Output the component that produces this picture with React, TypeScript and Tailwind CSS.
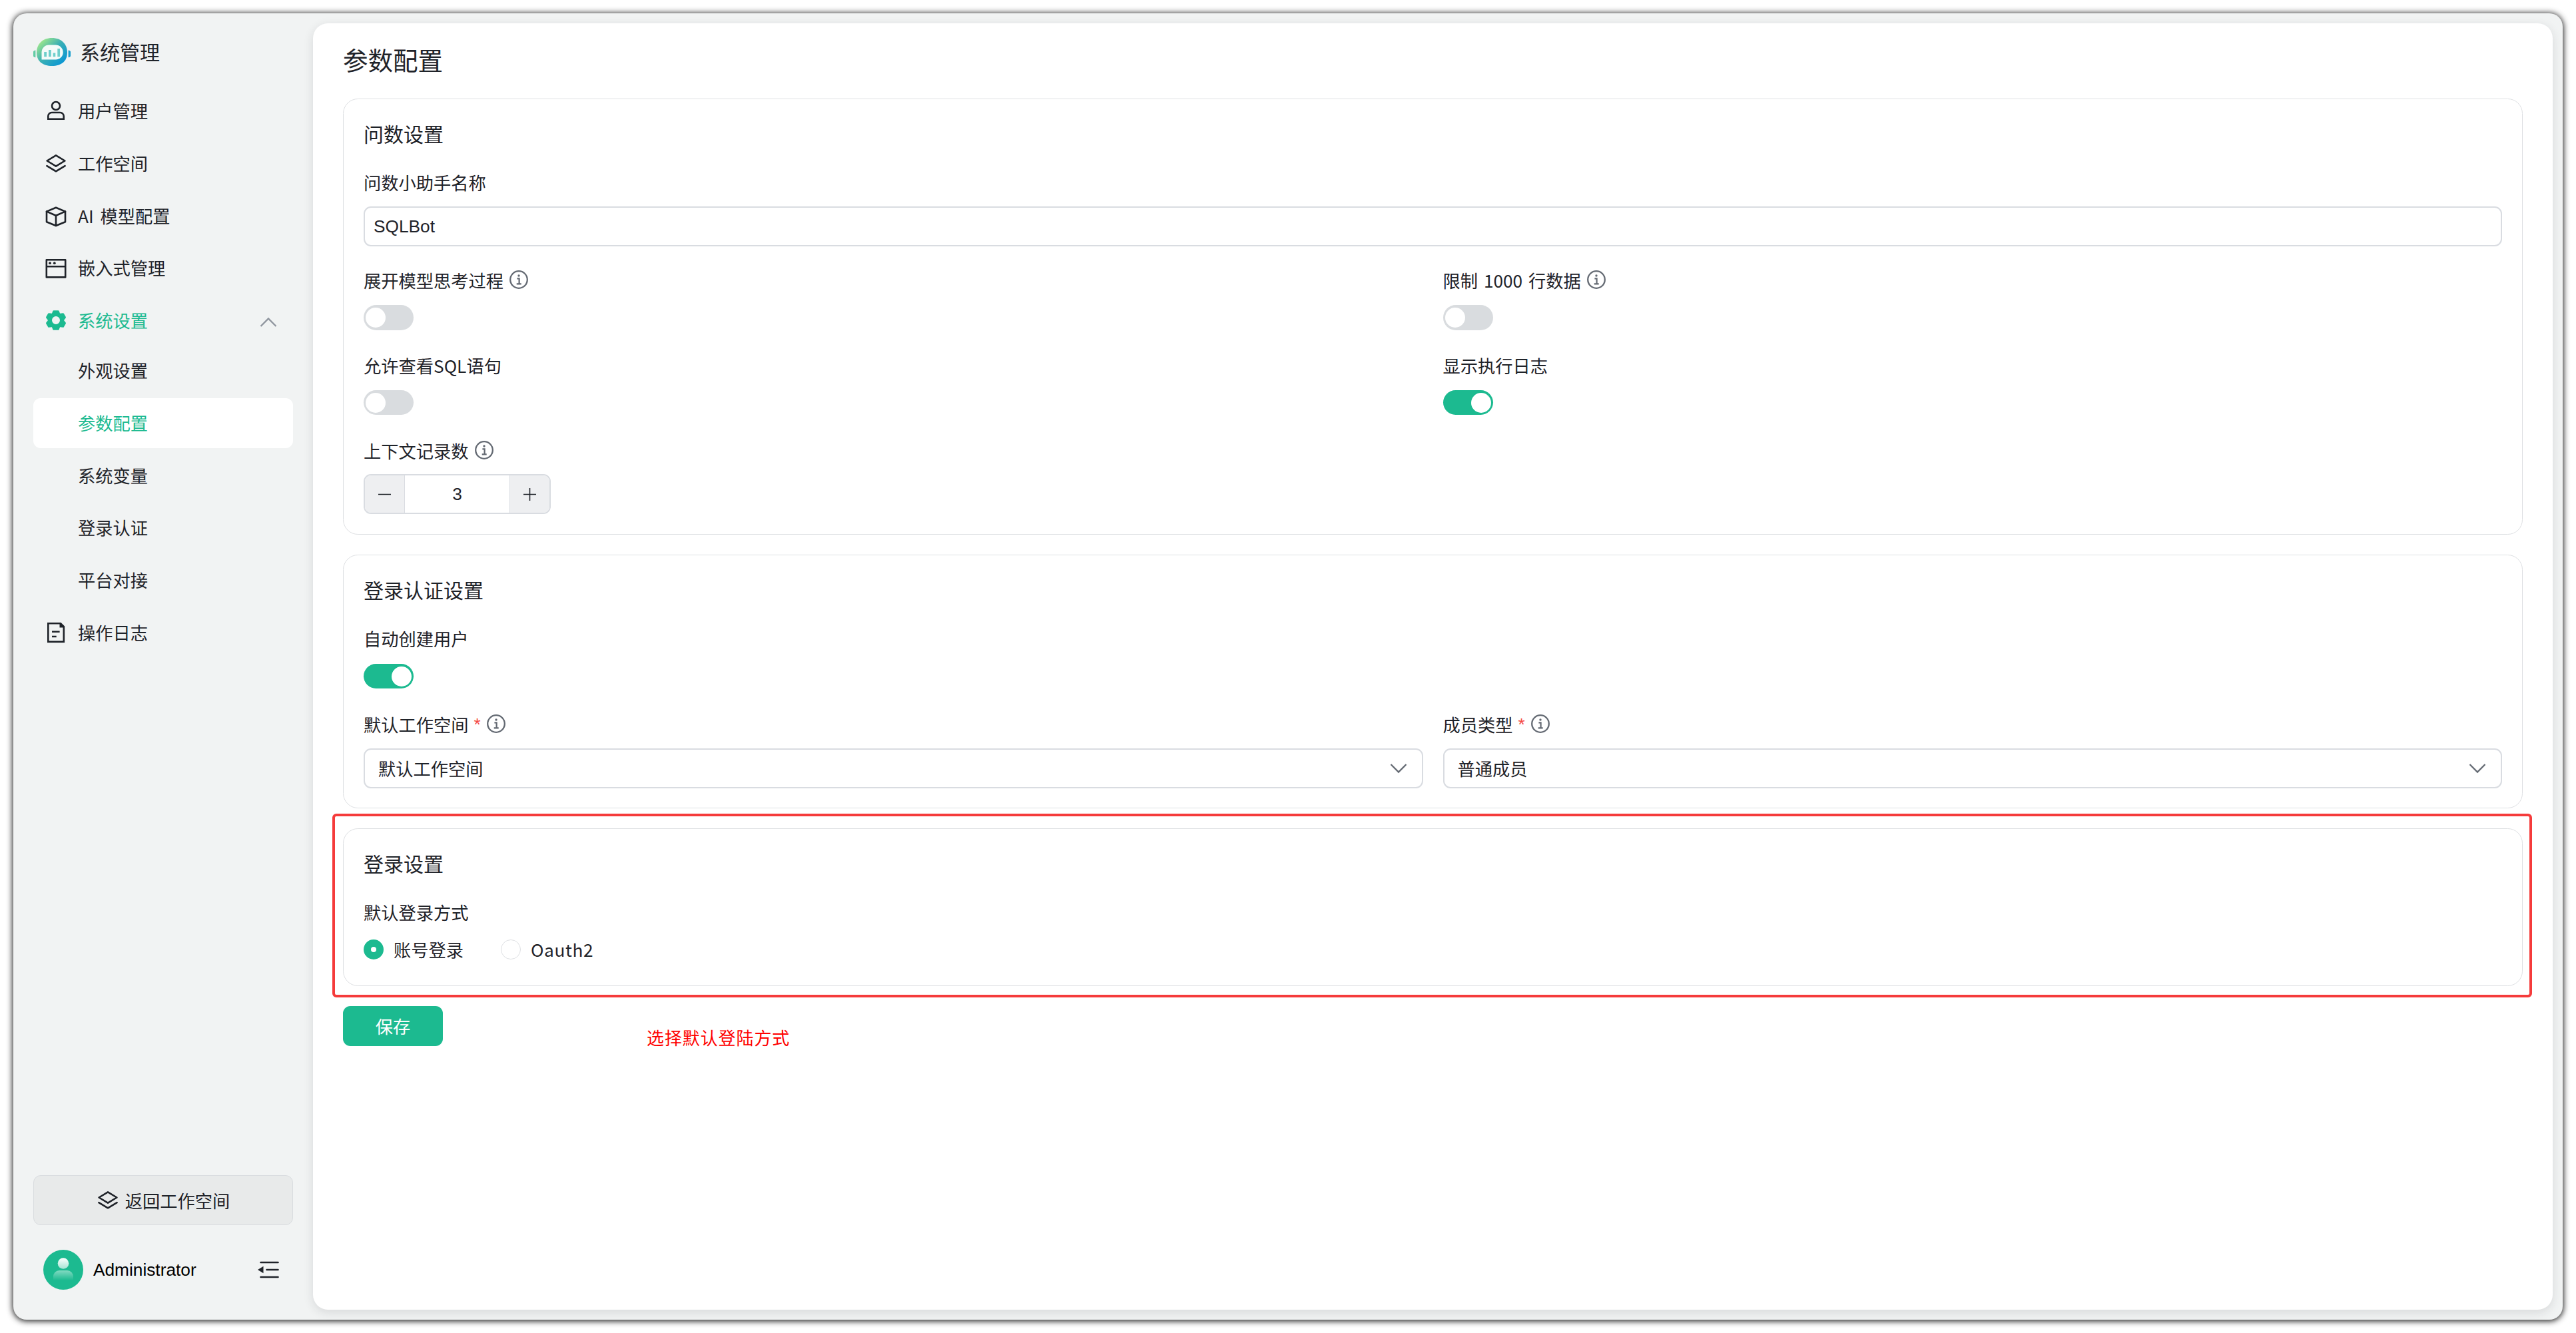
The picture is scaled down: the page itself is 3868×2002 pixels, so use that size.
import React from "react";

const CJK = "font-['Noto_Sans_CJK_SC',sans-serif]";
const ARIAL = "font-['Liberation_Sans','Noto_Sans_CJK_SC',sans-serif]";

function Icon({ children }: { children: React.ReactNode }) {
  return (
    <svg
      className="size-[34px] shrink-0"
      viewBox="0 0 34 34"
      fill="none"
      stroke="currentColor"
      strokeWidth="2.6"
      strokeLinejoin="round"
      strokeLinecap="round"
    >
      {children}
    </svg>
  );
}

const UserIcon = () => (
  <Icon>
    <circle cx="17" cy="9" r="6" />
    <path d="M5.3 28.8v-4.3a5.5 5.5 0 0 1 5.5-5.5h12.4a5.5 5.5 0 0 1 5.5 5.5v4.3z" strokeLinejoin="miter" />
  </Icon>
);

const LayersIcon = () => (
  <Icon>
    <path d="M17 4.4 30.4 12.5 17 20.6 3.6 12.5z" />
    <path d="M3.4 20.2 17 28.3l13.6-8.1" />
  </Icon>
);

const CubeIcon = () => (
  <Icon>
    <path d="M17 3.8 31 9.6v15.6L17 31 3 25.2V9.6z" />
    <path d="M3 9.6 17 15.8 31 9.6M17 15.8V31" />
  </Icon>
);

const WindowIcon = () => (
  <Icon>
    <path d="M2.8 4.2h28.4v26.2H2.800zM2.8 14.2h28.4" />
    <circle cx="8" cy="9.2" r="1.9" fill="currentColor" stroke="none" />
    <circle cx="14.8" cy="9.2" r="1.9" fill="currentColor" stroke="none" />
  </Icon>
);

const GearIcon = () => (
  <Icon>
    <path
      fill="currentColor"
      stroke="none"
      fillRule="evenodd"
      d="M13.600 1.200h6.800q.9 0 1.200.9l1.500 3.700 4.500-.6q.8-.1 1.200.6l2.900 5q.5.900 0 1.600L29 16l2.700 3.600q.5.700 0 1.600l-2.900 5q-.4.700-1.200.6l-4.500-.6-1.500 3.700q-.3.900-1.200.9h-6.800q-.9 0-1.200-.9l-1.500-3.700-4.500.6q-.8.100-1.200-.6l-2.900-5q-.5-.9 0-1.600L5 16l-2.700-3.600q-.5-.7 0-1.600l2.900-5q.4-.7 1.200-.6l4.500.6 1.500-3.700q.3-.9 1.200-.9zM17 10a6 6 0 1 0 0 12 6 6 0 0 0 0-12z"
    />
  </Icon>
);

const DocIcon = () => (
  <Icon>
    <path d="M5.300 2.300H24l4.800 4.800v22.800H5.300z" strokeLinejoin="miter" />
    <path d="M22.500 1.500v7h7.300z" fill="currentColor" stroke="none" />
    <path d="M11 14.800h11.600M11 22h6.700" strokeLinecap="butt" />
  </Icon>
);

const Logo = () => (
  <svg className="h-[42px] w-[56px] shrink-0" viewBox="0 0 56 42">
    <defs>
      <linearGradient id="brand" x1="10" y1="4" x2="42" y2="38" gradientUnits="userSpaceOnUse">
        <stop offset="0" stopColor="#a2ea8a" />
        <stop offset=".5" stopColor="#3bb0b4" />
        <stop offset="1" stopColor="#0e98d2" />
      </linearGradient>
    </defs>
    <path d="M28 0c14 0 23 9 23 22C51 35 42 42 28 42S5 35 5 22C5 9 14 0 28 0z" fill="url(#brand)" />
    <path d="M0 21q0-2 3.400-2.500v10.800Q0 28.800 0 27z" fill="#63cca5" />
    <path d="M56 21q0-2-3.400-2.500v10.800q3.400-.5 3.400-2.300z" fill="#1a9fcd" />
    <path d="M23.500 10.500h10A11 11 0 0 1 44.700 21.500 11 11 0 0 1 33.500 32.500H12.500V21.500A11 11 0 0 1 23.500 10.500z" fill="#f4fbfa" />
    <path d="M16.200 21h3.800v7.300h-3.800zM23 18h3.800v10.300H23zM29.700 22.500h3.600v5.800h-3.600zM36.300 16h3.800v12.300h-3.800z" fill="#6fcfcc" />
  </svg>
);

const InfoIcon = () => (
  <svg className="ml-[9px] size-[28px] shrink-0 text-[#646a73]" viewBox="0 0 28 28" fill="none" stroke="currentColor">
    <circle cx="14" cy="14" r="12.8" strokeWidth="2.3" />
    <circle cx="14" cy="8" r="1.7" fill="currentColor" stroke="none" />
    <path d="M11.400 12.400h3.200v7.600M10.700 20.300h7" strokeWidth="2.2" />
  </svg>
);

const ChevronDown = () => (
  <svg className="h-[16px] w-[26px] shrink-0 text-[#646a73]" viewBox="0 0 26 16" fill="none" stroke="currentColor" strokeWidth="2.3">
    <path d="M1.500 2 13 13.500 24.500 2" />
  </svg>
);

function NavItem({ icon, label, active, open }: { icon?: React.ReactNode; label: string; active?: boolean; open?: boolean }) {
  return (
    <div
      className={`flex h-[75px] shrink-0 items-center rounded-[11px] pr-[24px] ${icon ? "pl-[17px]" : "pl-[67px]"} ${
        active ? "bg-white" : ""
      } ${active || open ? "text-[#1cba90]" : "text-[#1f2329]"}`}
    >
      {icon}
      <span className={`relative -top-px text-[26.25px] leading-[40px] [word-spacing:4px] ${icon ? "ml-[16px]" : ""}`}>{label}</span>
      {open && (
        <svg className="mt-[4px] ml-auto h-[16px] w-[26px] text-[#8f959e]" viewBox="0 0 26 16" fill="none" stroke="currentColor" strokeWidth="2.3">
          <path d="M1.500 14 13 2.500 24.500 14" />
        </svg>
      )}
    </div>
  );
}

function Card({ title, className, children }: { title: string; className: string; children: React.ReactNode }) {
  return (
    <section className={`shrink-0 rounded-[22.5px] border border-[#dee0e3] px-[30px] pt-[29px] ${className}`}>
      <h2 className="text-[30px] leading-[45px] font-normal">{title}</h2>
      {children}
    </section>
  );
}

function Label({ text, required, info, className }: { text: string; required?: boolean; info?: boolean; className: string }) {
  return (
    <div className={`flex h-[40px] items-center text-[26.25px] leading-[40px] ${className}`}>
      <span className="pt-[2px] [word-spacing:3px]">{text}</span>
      {required && <span className={`${ARIAL} ml-[8px] pt-[2px] text-[#f54a45]`}>*</span>}
      {info && <InfoIcon />}
    </div>
  );
}

function Toggle({ on, className }: { on?: boolean; className: string }) {
  return (
    <div className={`flex w-[75px] items-center rounded-full px-[3px] ${on ? "justify-end bg-[#1cba90]" : "bg-[#d9dcdf]"} ${className}`}>
      <div className="size-[30px] rounded-full bg-white" />
    </div>
  );
}

function Select({ value }: { value: string }) {
  return (
    <div className="mt-[17px] flex h-[60px] items-center justify-between rounded-[11px] border-2 border-[#d9dce1] pr-[22px] pl-[20px] text-[26.25px] leading-[40px]">
      <span>{value}</span>
      <ChevronDown />
    </div>
  );
}

export default function App() {
  return (
    <div className={`${CJK} h-[2002px] w-[3868px] overflow-hidden bg-white p-[20px] text-[#1f2329]`}>
      <div className="flex h-[1962px] w-[3828px] rounded-[20px] bg-[#f1f3f3] shadow-[0_1px_10px_1px_rgba(0,0,0,0.9)]">
        <aside className="flex w-[450px] shrink-0 flex-col px-[30px]">
          <div className="mt-[37px] flex h-[42px] items-center">
            <Logo />
            <span className="-mt-[2px] ml-[14px] text-[30px] leading-[42px]">系统管理</span>
          </div>
          <nav className="mt-[30.5px] flex flex-col gap-[3.75px]">
            <NavItem icon={<UserIcon />} label="用户管理" />
            <NavItem icon={<LayersIcon />} label="工作空间" />
            <NavItem icon={<CubeIcon />} label="AI 模型配置" />
            <NavItem icon={<WindowIcon />} label="嵌入式管理" />
            <div>
              <NavItem icon={<GearIcon />} label="系统设置" open />
              <div className="flex flex-col gap-[3.75px]">
                <NavItem label="外观设置" />
                <NavItem label="参数配置" active />
                <NavItem label="系统变量" />
                <NavItem label="登录认证" />
                <NavItem label="平台对接" />
              </div>
            </div>
            <NavItem icon={<DocIcon />} label="操作日志" />
          </nav>
          <div className="mt-auto flex h-[75px] w-[390px] items-center justify-center rounded-[11px] border border-[#d9dcdf] bg-[#e8eaea] text-[26.25px] leading-[40px]">
            <LayersIcon />
            <span className="ml-[9px]">返回工作空间</span>
          </div>
          <div className="mt-[37px] mb-[45px] flex h-[60px] items-center pr-[21px] pl-[15px]">
            <svg className="size-[60px] shrink-0" viewBox="0 0 60 60">
              <defs>
                <linearGradient id="head" x1="0" y1="0" x2="0" y2="1">
                  <stop offset="0" stopColor="#fff" />
                  <stop offset="1" stopColor="#fff" stopOpacity=".6" />
                </linearGradient>
                <linearGradient id="torso" x1="0" y1="0" x2="0" y2="1">
                  <stop offset="0" stopColor="#fff" stopOpacity=".45" />
                  <stop offset="1" stopColor="#fff" stopOpacity="0" />
                </linearGradient>
              </defs>
              <circle cx="30" cy="30" r="30" fill="#1cba90" />
              <circle cx="30" cy="20.5" r="8.3" fill="url(#head)" />
              <path d="M15 46v-6a9 9 0 0 1 9-9h12a9 9 0 0 1 9 9v6z" fill="url(#torso)" />
            </svg>
            <span className={`${ARIAL} ml-[15px] text-[26.25px] leading-[40px] text-black`}>Administrator</span>
            <svg className="ml-auto h-[28px] w-[33px] text-[#1f2329]" viewBox="0 0 33 28" fill="none" stroke="currentColor" strokeWidth="2.6" strokeLinecap="round">
              <path d="M5.500 3h26M14.500 14h17M5.500 25h26" />
              <path d="M1 14 9.500 8.800v10.400z" fill="currentColor" stroke="none" />
            </svg>
          </div>
        </aside>

        <main className="mt-[15px] flex h-[1932px] w-[3363px] flex-col rounded-[22.5px] bg-white px-[45px] shadow-[0_4px_15px_rgba(31,35,41,0.12)]">
          <h1 className="mt-[26px] text-[37.5px] leading-[56px] font-normal">参数配置</h1>

          <Card title="问数设置" className="mt-[31px] h-[655px]">
            <Label text="问数小助手名称" className="mt-[30px]" />
            <div className={`${ARIAL} mt-[17px] flex h-[60px] items-center rounded-[11px] border-2 border-[#d9dce1] pl-[13px] text-[26.25px] leading-[40px]`}>
              SQLBot
            </div>
            <div className="mt-[30px] grid grid-cols-2 gap-x-[30px]">
              <div>
                <Label text="展开模型思考过程" info className="" />
                <Toggle className="mt-[18px] h-[38px]" />
                <Label text="允许查看SQL语句" className="mt-[32px]" />
                <Toggle className="mt-[18px] h-[37px]" />
              </div>
              <div>
                <Label text="限制 1000 行数据" info className="" />
                <Toggle className="mt-[18px] h-[38px]" />
                <Label text="显示执行日志" className="mt-[32px]" />
                <Toggle on className="mt-[18px] h-[37px]" />
              </div>
            </div>
            <Label text="上下文记录数" info className="mt-[33px]" />
            <div className="mt-[16px] flex h-[60px] w-[281px] overflow-hidden rounded-[11px] border-2 border-[#d9dce1]">
              <div className="flex w-[60px] shrink-0 items-center justify-center border-r border-[#d9dce1] bg-[#eeeff1]">
                <svg className="size-[19px]" viewBox="0 0 19 19" stroke="#1f2329" strokeWidth="1.6">
                  <path d="M0 9.500h19" />
                </svg>
              </div>
              <div className={`${ARIAL} flex flex-1 items-center justify-center text-[26.25px] leading-[40px]`}>3</div>
              <div className="flex w-[60px] shrink-0 items-center justify-center border-l border-[#d9dce1] bg-[#eeeff1]">
                <svg className="size-[19px]" viewBox="0 0 19 19" stroke="#1f2329" strokeWidth="1.6">
                  <path d="M0 9.500h19M9.500 0v19" />
                </svg>
              </div>
            </div>
          </Card>

          <Card title="登录认证设置" className="mt-[30px] h-[381px]">
            <Label text="自动创建用户" className="mt-[30px]" />
            <Toggle on className="mt-[19px] h-[37px]" />
            <div className="mt-[33px] grid grid-cols-2 gap-x-[30px]">
              <div className="-mb-px">
                <Label text="默认工作空间" required info className="" />
                <Select value="默认工作空间" />
              </div>
              <div className="-mb-px">
                <Label text="成员类型" required info className="" />
                <Select value="普通成员" />
              </div>
            </div>
          </Card>

          <div className="relative mt-[30px]">
            <Card title="登录设置" className="h-[237px]">
              <Label text="默认登录方式" className="mt-[30px]" />
              <div className="mt-[22px] flex h-[30px] items-center text-[26.25px] leading-[40px]">
                <div className="flex size-[30px] items-center justify-center rounded-full bg-[#1cba90]">
                  <div className="size-[8px] rounded-full bg-white" />
                </div>
                <span className="ml-[15px] w-[161px]">账号登录</span>
                <div className="size-[30px] rounded-full border border-[#dee0e3]" />
                <span className="ml-[15px] tracking-[0.6px]">Oauth2</span>
              </div>
            </Card>
            <div className="pointer-events-none absolute -top-[22px] -right-[14px] -bottom-[17px] -left-[16px] rounded-[6px] border-4 border-[#f53b3b]" />
          </div>

          <div className="mt-[30px] flex items-start">
            <button className="h-[60px] w-[150px] rounded-[11px] bg-[#1cba90] text-[26.25px] leading-[58px] text-white">保存</button>
            <span className="mt-[27px] ml-[306px] text-[26px] leading-[40px] tracking-[0.9px] text-[#ff0000]">选择默认登陆方式</span>
          </div>
        </main>
      </div>
    </div>
  );
}
